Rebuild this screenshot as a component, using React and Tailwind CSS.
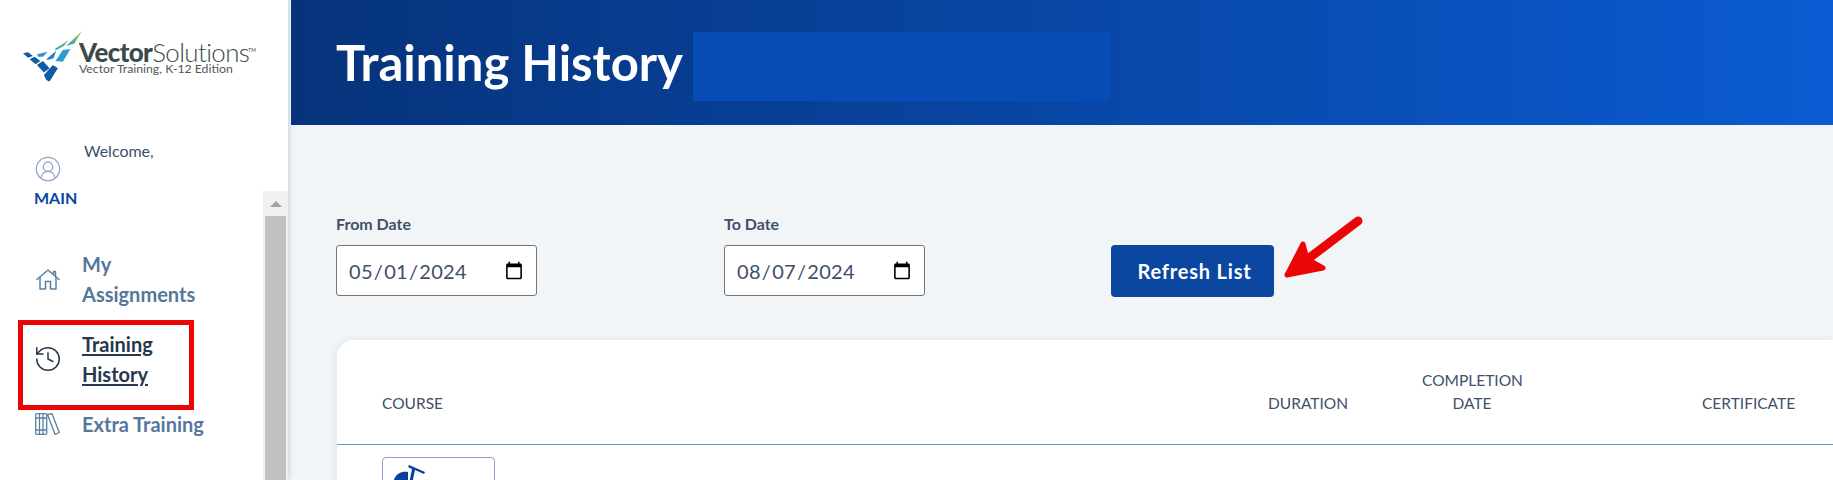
import React from 'react';
import { History, CircleUserRound } from 'lucide-react';

const HomeIcon = () => (
  <svg width="24" height="21" viewBox="0 0 24 21" fill="none" stroke="#5b7fa3" strokeWidth="1.5" strokeLinejoin="round" strokeLinecap="round">
    <path d="M1 10.5 L12 1 L23 10.5" />
    <path d="M4 8.5 V20 H9.5 V12.5 H14.5 V20 H20 V8.5" />
    <path d="M17.5 4.5 V2.5 H19.5 V6.5" />
  </svg>
);

const BooksIcon = () => (
  <svg width="25" height="22" viewBox="0 0 25 22" fill="none" stroke="#5b7fa3" strokeWidth="1.3" strokeLinejoin="round">
    <rect x="0.7" y="0.7" width="11" height="20.6" rx="1" />
    <path d="M4.5 1 V21 M8 1 V21 M1 5 H11.5 M1 17 H11.5" />
    <path d="M12.5 1.5 L17 0.7 L24.3 19.5 L20 21.3 Z" />
  </svg>
);

const LogoMark = () => (
  <svg width="60" height="52" viewBox="70 90 180 156">
    <defs>
      <linearGradient id="tail" x1="0" y1="1" x2="1" y2="0">
        <stop offset="0" stopColor="#1c9ad0" />
        <stop offset="1" stopColor="#a8d548" />
      </linearGradient>
    </defs>
    <polygon points="70,160 85,157 100,168 85,173" fill="#0d5aa7" />
    <polygon points="113,163 145,155 130,170 115,170" fill="#2d8fd0" />
    <polygon points="140,178 170,152 162,175 145,180" fill="#1f82c8" />
    <polygon points="168,183 190,150 213,147 190,185" fill="#2a9bd3" />
    <polygon points="90,178 105,170 122,183 108,193" fill="#0d5aa7" />
    <polygon points="112,195 130,183 150,205 133,218" fill="#0d5aa7" />
    <polygon points="133,225 160,195 175,205 150,245 140,240" fill="#0d5aa7" />
    <polygon points="165,148 207,120 195,137 170,150" fill="url(#tail)" />
    <polygon points="200,138 248,92 225,130" fill="url(#tail)" />
  </svg>
);

// wordmark is part of the logo, the two lines sit very tight
const LogoText = () => (
  <svg width="185" height="50" viewBox="0 0 185 50" className="-ml-[4px]">
    <text x="0" y="32" fontSize="26" letterSpacing="-0.6" fill="#3c4a4a" fontFamily="Lato, sans-serif">
      <tspan fontWeight="900">Vector</tspan>
      <tspan fontWeight="300">Solutions</tspan>
    </text>
    <text x="170" y="22" fontSize="5" fill="#3c4a4a" fontFamily="Lato, sans-serif">TM</text>
    <text x="0" y="43" fontSize="12.3" fill="#4d5a5a" fontFamily="Lato, sans-serif">Vector Training, K-12 Edition</text>
  </svg>
);

const NavItem = ({ icon, lines, active }) => (
  <div className="flex items-center">
    <div className="w-[47px] h-[30px] flex items-center justify-center">{icon}</div>
    <div className={`ml-[11px] text-[20px] leading-[30px] font-bold ${active ? 'text-[#27374d] underline underline-offset-2' : 'text-[#55779b]'}`}>
      {lines.map((l) => <div key={l}>{l}</div>)}
    </div>
  </div>
);

const DateField = ({ label, value }) => (
  <div className="w-[201px]">
    <label className="block text-[16px] leading-[20px] font-bold text-[#3f5068] mb-[11px]">{label}</label>
    <input
      type="date"
      defaultValue={value}
      className="w-full h-[51px] pl-[11px] pr-[10px] bg-white border border-[#767676] rounded-[3px] text-[20px] text-[#3f5068] tracking-[0.3px] outline-none"
    />
  </div>
);

export default function App() {
  return (
    <div className="flex h-[480px] w-[1833px] overflow-hidden bg-[#f1f5f8] font-['Lato',sans-serif] relative">
      <aside className="w-[288px] shrink-0 bg-white flex shadow-[2px_0_4px_rgba(120,140,165,0.25)] z-10">
        <div className="flex-1 min-w-0">
          <div className="flex items-start pt-[30px] pl-[23px] h-[134px]">
            <LogoMark />
            <LogoText />
          </div>
          <div className="pl-[34px]">
            <div className="text-[16px] leading-[20px] text-[#3d5068] pl-[50px] pt-[7px]">Welcome,</div>
            <CircleUserRound size={28} strokeWidth={1.1} className="text-[#8ba8c4] -mt-[6px]" />
            <div className="text-[16px] leading-[20px] font-bold text-[#0a47a1] mt-[5px]">MAIN</div>
          </div>
          <div className="mt-[41px] pl-[24px] flex flex-col gap-[20px]">
            <NavItem icon={<HomeIcon />} lines={['My', 'Assignments']} />
            <NavItem active icon={<History size={30} strokeWidth={1.2} className="text-[#27374d]" />} lines={['Training', 'History']} />
            <NavItem icon={<BooksIcon />} lines={['Extra Training']} />
          </div>
        </div>
        <div className="w-[25px] shrink-0 pt-[191px]">
          <div className="h-full bg-[#f1f1f1] px-[2px]">
            <div className="h-[25px] flex items-center justify-center">
              <div className="w-0 h-0 border-x-[6px] border-x-transparent border-b-[6px] border-b-[#a3a3a3]" />
            </div>
            <div className="h-[264px] bg-[#c1c1c1]" />
          </div>
        </div>
      </aside>

      <main className="flex-1 min-w-0 ml-[3px]">
        <header className="h-[125px] bg-gradient-to-r from-[#06337b] to-[#0a5bd2] pl-[45px] flex items-center">
          <h1 className="text-[49px] font-bold text-white leading-none">Training History</h1>
          <div className="ml-[10px] mt-[7px] w-[416px] h-[69px] bg-[#084bb3] border-[4px] border-[#064db9]" />
        </header>

        <div className="pl-[45px]">
          <div className="flex items-start pt-[89px]">
            <DateField label="From Date" value="2024-05-01" />
            <div className="ml-[187px]"><DateField label="To Date" value="2024-08-07" /></div>
            <button className="ml-[186px] mt-[31px] w-[163px] h-[52px] pl-[4px] bg-[#0a47a1] rounded-[4px] text-white text-[20px] font-bold tracking-[0.8px]">
              Refresh List
            </button>
          </div>

          <section className="mt-[43px] ml-[1px] h-[200px] bg-white rounded-tl-[16px] shadow-[-2px_0_6px_rgba(120,140,165,0.12)]">
            <div className="h-[105px] border-b border-[#6f8fbd] flex items-end pb-[29px] text-[15.5px] leading-[23px] text-[#3f5068] pl-[45px]">
              <div className="w-[886px]">COURSE</div>
              <div className="w-[154px]">DURATION</div>
              <div className="w-[100px] text-center">COMPLETION<br />DATE</div>
              <div className="ml-[180px]">CERTIFICATE</div>
            </div>
            <div className="pl-[45px] pt-[12px]">
              <div className="w-[113px] h-[60px] border border-[#8ba3c4] rounded-[4px] pl-[10px] pt-[6px]">
                <svg width="44" height="20" viewBox="0 0 44 20" fill="#0a3fa0">
                  <path d="M0 20 C1 10 8 7 15 8 L15 20 Z" />
                  <path d="M16 1 L32 8 L31 10 L22 6 L19 20 L16 20 L19 5 L15 3 Z" />
                </svg>
              </div>
            </div>
          </section>
        </div>
      </main>

      <div className="absolute left-[18px] top-[320px] w-[176px] h-[90px] border-[5px] border-[#ea0606] pointer-events-none z-20" />
      <svg className="absolute left-[1280px] top-[212px] z-20" width="86" height="72" viewBox="0 0 86 72" fill="#ea0606" stroke="#ea0606" strokeLinecap="round" strokeLinejoin="round">
        <path d="M78 9 L16 56" strokeWidth="9" fill="none" />
        <path d="M7 63 L23 32 L27 47 L43 56 Z" strokeWidth="5" />
      </svg>
    </div>
  );
}
